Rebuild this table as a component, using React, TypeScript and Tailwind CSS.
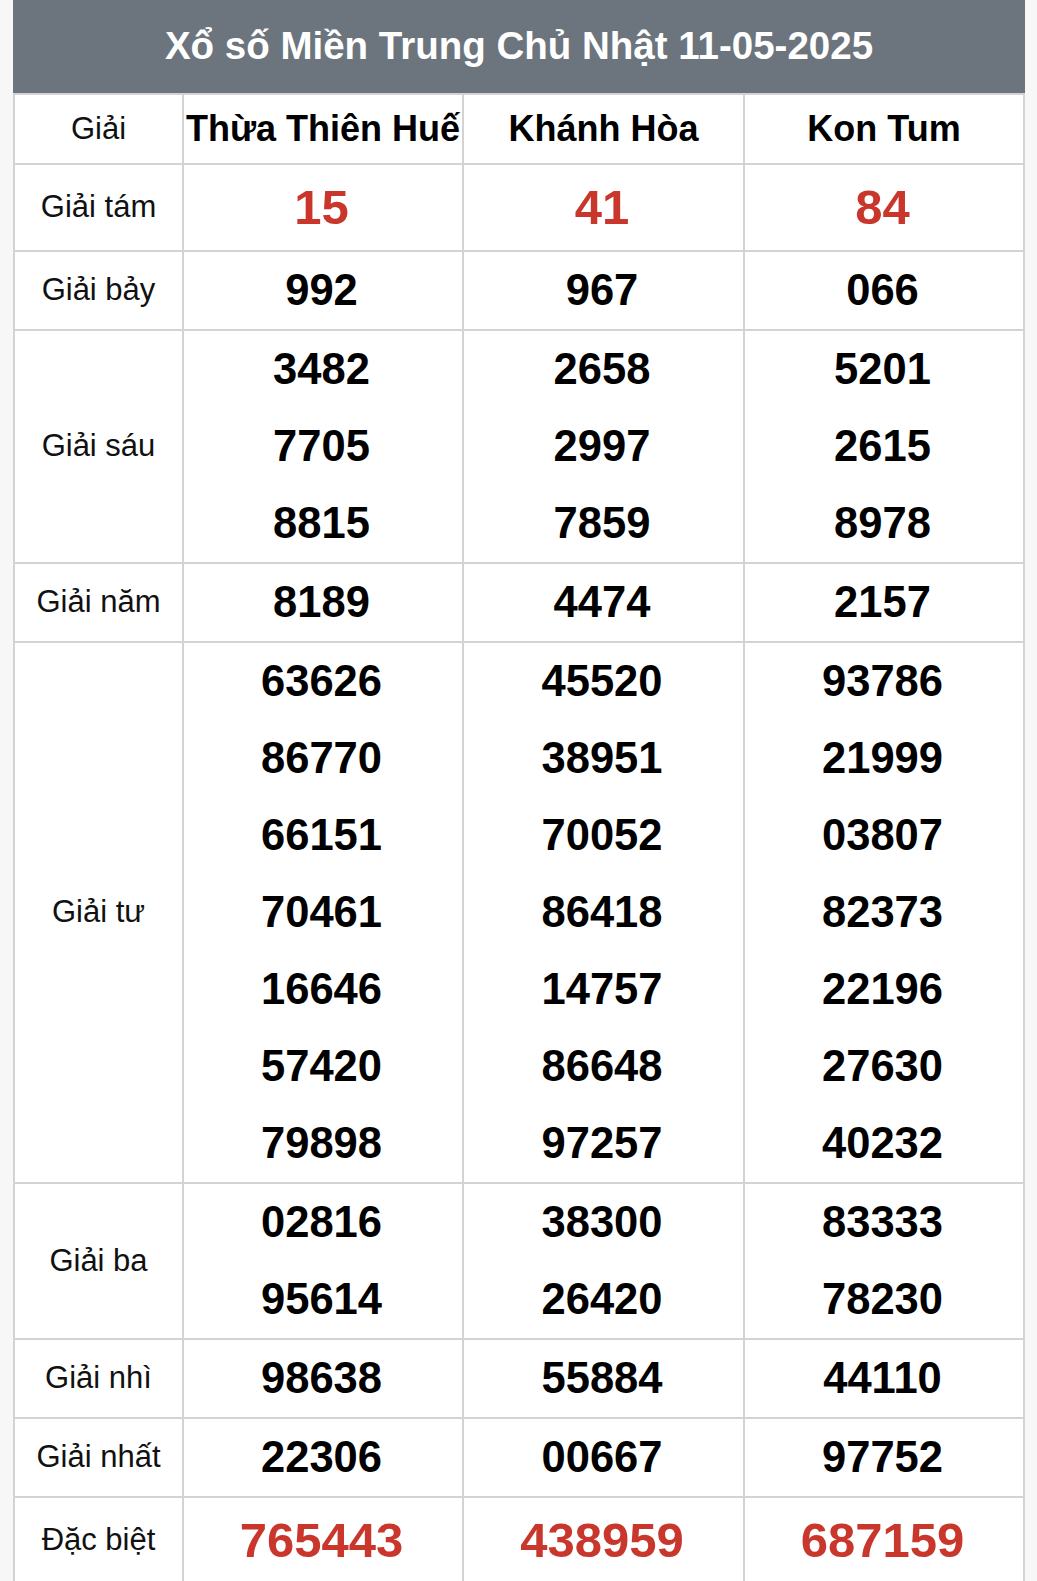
import React from "react";

type Row = {
  label: string;
  cols: string[][];
  red?: boolean;
};

const ROWS: Row[] = [
  { label: "Giải tám", cols: [["15"], ["41"], ["84"]], red: true },
  { label: "Giải bảy", cols: [["992"], ["967"], ["066"]] },
  {
    label: "Giải sáu",
    cols: [
      ["3482", "7705", "8815"],
      ["2658", "2997", "7859"],
      ["5201", "2615", "8978"],
    ],
  },
  { label: "Giải năm", cols: [["8189"], ["4474"], ["2157"]] },
  {
    label: "Giải tư",
    cols: [
      ["63626", "86770", "66151", "70461", "16646", "57420", "79898"],
      ["45520", "38951", "70052", "86418", "14757", "86648", "97257"],
      ["93786", "21999", "03807", "82373", "22196", "27630", "40232"],
    ],
  },
  {
    label: "Giải ba",
    cols: [
      ["02816", "95614"],
      ["38300", "26420"],
      ["83333", "78230"],
    ],
  },
  { label: "Giải nhì", cols: [["98638"], ["55884"], ["44110"]] },
  { label: "Giải nhất", cols: [["22306"], ["00667"], ["97752"]] },
  { label: "Đặc biệt", cols: [["765443"], ["438959"], ["687159"]], red: true },
];

const PROVINCES = ["Thừa Thiên Huế", "Khánh Hòa", "Kon Tum"];

export default function App() {
  return (
    <div className="min-h-screen bg-[#f7f7f7] pl-[13px] pr-[12px] font-['Liberation_Sans',Arial,sans-serif]">
      <div className="flex h-[93px] items-center justify-center bg-[#6c757d]">
        <h1 className="text-[38.5px] font-bold leading-none text-white">
          Xổ số Miền Trung Chủ Nhật 11-05-2025
        </h1>
      </div>

      <div className="grid grid-cols-[167px_278px_279px_278px] gap-[2px] bg-[#d3d3d3] p-[2px]">
        {/* Header row */}
        <div className="flex h-[68px] items-center justify-center bg-white text-[31px] text-[#111]">
          Giải
        </div>
        {PROVINCES.map((p) => (
          <div
            key={p}
            className="flex h-[68px] items-center justify-center whitespace-nowrap bg-white text-[36px] font-bold text-black"
          >
            {p}
          </div>
        ))}

        {ROWS.map((row) => (
          <React.Fragment key={row.label}>
            <div className="flex items-center justify-center bg-white text-[31px] text-[#111]">
              {row.label}
            </div>
            {row.cols.map((nums, i) => (
              <div key={i} className="flex flex-col bg-white">
                {nums.map((n, j) =>
                  row.red ? (
                    <div
                      key={j}
                      className="h-[85px] pr-[3px] text-center text-[49px] font-bold leading-[85px] text-[#c9372c]"
                    >
                      {n}
                    </div>
                  ) : (
                    <div
                      key={j}
                      className="h-[77px] pr-[3px] text-center text-[43.5px] font-bold leading-[77px] text-black"
                    >
                      {n}
                    </div>
                  )
                )}
              </div>
            ))}
          </React.Fragment>
        ))}
      </div>
    </div>
  );
}
